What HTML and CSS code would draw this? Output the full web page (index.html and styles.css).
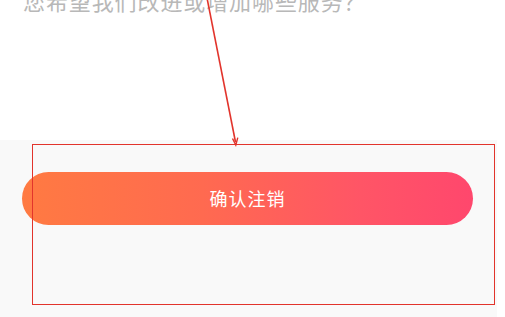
FILE: index.html
```
<!DOCTYPE html>
<html lang="zh-CN">
<head>
<meta charset="utf-8">
<link rel="stylesheet" href="styles.css">
</head>
<body>
<div class="page">
  <section class="top">
    <p class="question">您希望我们改进或增加哪些服务？</p>
  </section>
  <section class="panel">
    <button class="confirm">确认注销</button>
  </section>
  <div class="mark-box"></div>
  <svg class="mark-line" width="505" height="317" viewBox="0 0 505 317">
    <line x1="207" y1="-2" x2="235.5" y2="142" stroke="#e2342c" stroke-width="1.6"/>
    <path d="M232.5 138.5 L235.8 145 L237.8 137.6" fill="none" stroke="#e2342c" stroke-width="1.4"/>
  </svg>
</div>
</body>
</html>
```
FILE: styles.css
```
html, body {
  margin: 0;
  padding: 0;
  background: #ffffff;
}
.page {
  position: relative;
  width: 505px;
  height: 317px;
  overflow: hidden;
  font-family: "Noto Sans CJK SC", "Noto Sans", sans-serif;
}
.top {
  height: 140px;
  background: #ffffff;
  overflow: hidden;
}
.question {
  margin: -11px 0 0 0;
  padding-left: 23px;
  font-size: 22px;
  line-height: 22px;
  color: #b8b8b8;
  font-weight: 400;
  letter-spacing: 0.9px;
  white-space: nowrap;
}
.panel {
  width: 497px;
  height: 177px;
  background: #f9f9f9;
  box-sizing: border-box;
  padding-top: 32px;
  padding-left: 22px;
}
.confirm {
  display: flex;
  align-items: center;
  justify-content: center;
  width: 451px;
  height: 53px;
  border: none;
  border-radius: 27px;
  background: linear-gradient(90deg, #ff7a42 0%, #ff6a50 40%, #ff5566 75%, #ff476d 100%);
  color: #ffffff;
  font-family: "Noto Sans CJK SC", sans-serif;
  font-size: 18px;
  letter-spacing: 1px;
  padding: 0 0 2px 0;
  margin: 0;
}
.mark-box {
  position: absolute;
  left: 32px;
  top: 144px;
  width: 463px;
  height: 161px;
  box-sizing: border-box;
  border: 1.6px solid #e2342c;
}
.mark-line {
  position: absolute;
  left: 0;
  top: 0;
  pointer-events: none;
}
```
